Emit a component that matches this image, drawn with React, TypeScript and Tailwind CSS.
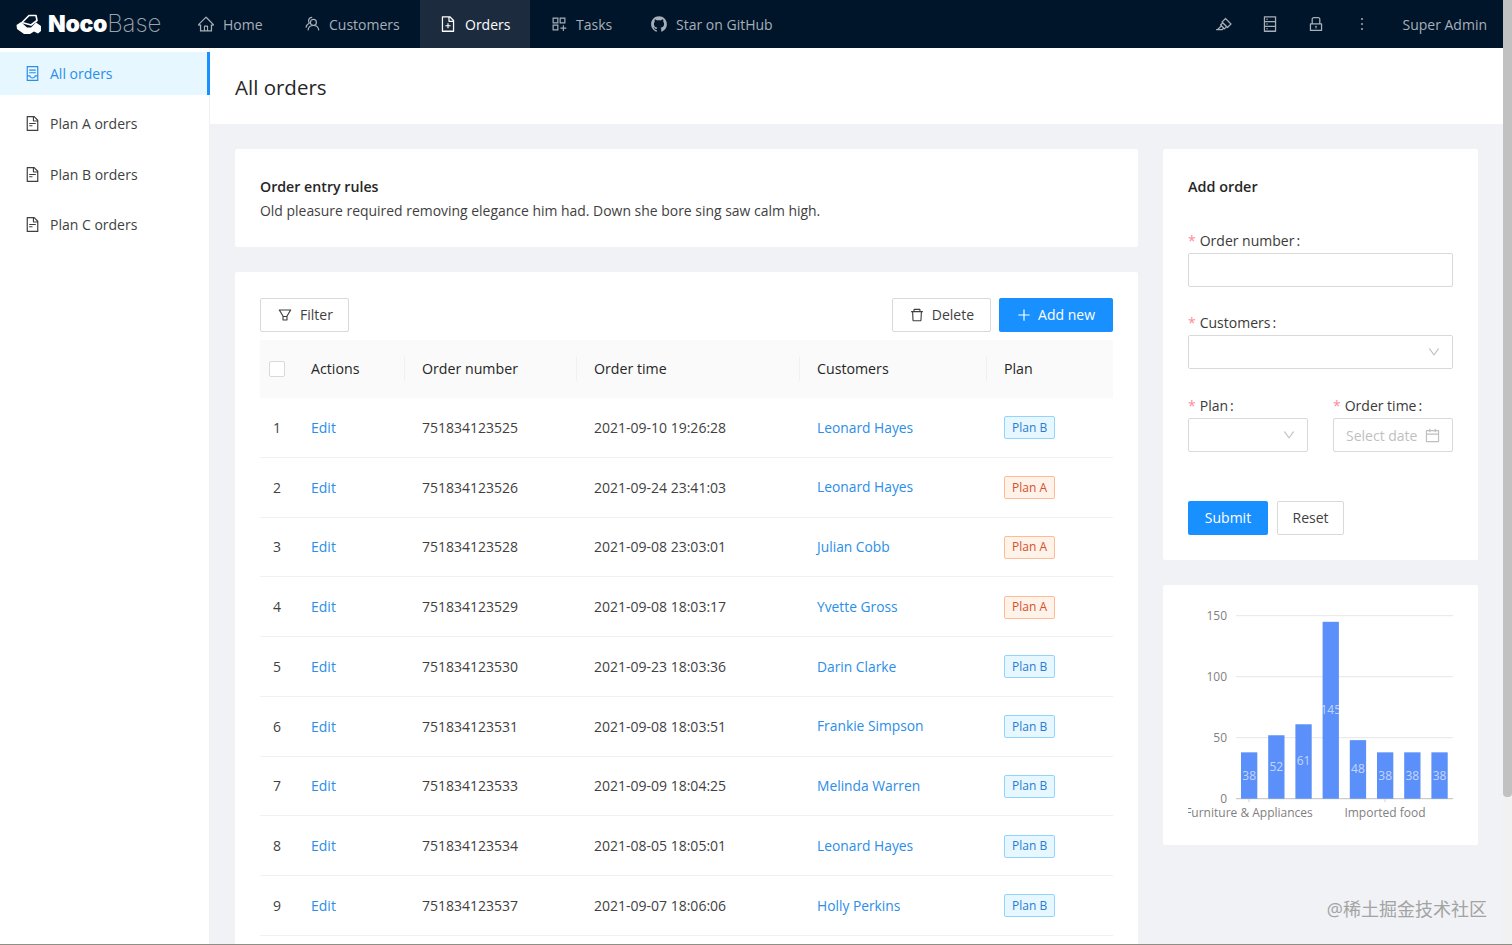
import React from 'react';
import {
  AiOutlineHome,
  AiOutlineFileAdd,
  AiOutlineAppstoreAdd,
  AiFillGithub,
  AiOutlineHighlight,
  AiOutlineDatabase,
  AiOutlineLock,
  AiOutlineMore,
  AiOutlineContainer,
  AiOutlineFileText,
  AiOutlineFilter,
  AiOutlineDelete,
  AiOutlinePlus,
  AiOutlineDown,
  AiOutlineCalendar,
} from 'react-icons/ai';

const orders = [
  { no: '751834123525', time: '2021-09-10 19:26:28', customer: 'Leonard Hayes', plan: 'B' },
  { no: '751834123526', time: '2021-09-24 23:41:03', customer: 'Leonard Hayes', plan: 'A' },
  { no: '751834123528', time: '2021-09-08 23:03:01', customer: 'Julian Cobb', plan: 'A' },
  { no: '751834123529', time: '2021-09-08 18:03:17', customer: 'Yvette Gross', plan: 'A' },
  { no: '751834123530', time: '2021-09-23 18:03:36', customer: 'Darin Clarke', plan: 'B' },
  { no: '751834123531', time: '2021-09-08 18:03:51', customer: 'Frankie Simpson', plan: 'B' },
  { no: '751834123533', time: '2021-09-09 18:04:25', customer: 'Melinda Warren', plan: 'B' },
  { no: '751834123534', time: '2021-08-05 18:05:01', customer: 'Leonard Hayes', plan: 'B' },
  { no: '751834123537', time: '2021-09-07 18:06:06', customer: 'Holly Perkins', plan: 'B' },
];

const bars = [38, 52, 61, 145, 48, 38, 38, 38];

const TeamIcon = () => (
  <svg width="18" height="18" viewBox="0 0 18 18" fill="none" stroke="currentColor" strokeWidth="1.2">
    <circle cx="10.4" cy="7.4" r="3" />
    <path d="M5 15.400c.3-2.900 2.500-4.900 5.400-4.900s5.100 2 5.400 4.900" />
    <path d="M9.200 2.300A3.400 3.400 0 0 0 5.600 5.700c0 .9.300 1.700.8 2.300-1.800.9-3.100 2.600-3.400 4.700" />
  </svg>
);

const NavItem: React.FC<{ icon: React.ReactNode; label: string; active?: boolean; className: string }> = ({
  icon,
  label,
  active,
  className,
}) => (
  <div
    className={`flex h-full items-center gap-[8px] ${className} ${active ? 'bg-[#1c2b3d] text-white' : 'text-[#a7afb9]'}`}
  >
    <span className="text-[18px]">{icon}</span>
    <span>{label}</span>
  </div>
);

const SideItem: React.FC<{ label: string; active?: boolean }> = ({ label, active }) => (
  <div
    className={`flex h-[43px] items-center gap-[9px] pl-[24px] ${
      active ? '-mr-px border-r-[3px] border-[#1890ff] bg-[#e6f7ff] text-[#2b8ee8]' : 'text-[#3f3f3f]'
    }`}
  >
    <span className="text-[17px]">{active ? <AiOutlineContainer /> : <AiOutlineFileText />}</span>
    <span>{label}</span>
  </div>
);

const Label: React.FC<{ text: string }> = ({ text }) => (
  <div className="mb-[2px] flex h-[22px] items-center text-[#3a3a3a]">
    <span className="mr-[4px] text-[#ff8a9a]">*</span>
    {text}
    <span className="ml-[2px]">:</span>
  </div>
);

const fieldClass = 'flex h-[34px] items-center rounded-[2px] border border-[#d9d9d9] bg-white';

const PlanTag: React.FC<{ plan: string }> = ({ plan }) => (
  <span
    className={`mt-[1px] inline-flex h-[23px] items-center rounded-[2px] border px-[7px] text-[12px] ${
      plan === 'A'
        ? 'border-[#ffbb96] bg-[#fff2e8] text-[#d4502d]'
        : 'border-[#91d5ff] bg-[#e6f7ff] text-[#2b7ccf]'
    }`}
  >
    Plan {plan}
  </span>
);

const Chart = () => (
  <svg width="315" height="260" viewBox="1163 585 315 260" className="block">
    {[150, 100, 50].map((v, i) => (
      <line key={v} x1="1236" x2="1453" y1={615.7 + i * 61} y2={615.7 + i * 61} stroke="#e6e6e6" strokeWidth="1" />
    ))}
    <line x1="1236" x2="1453" y1="798.7" y2="798.7" stroke="#bfbfbf" strokeWidth="1" />
    {[150, 100, 50, 0].map((v, i) => (
      <text key={v} x="1227" y={620 + i * 61} textAnchor="end" fontSize="12" fill="#7f7f7f">
        {v}
      </text>
    ))}
    {bars.map((v, i) => {
      const x = 1241 + i * 27.2;
      const h = v * 1.22;
      return (
        <g key={i}>
          <rect x={x} y={798.7 - h} width="16.3" height={h} fill="#5b8ff9" />
          <text
            x={x + 8.15}
            y={798.7 - h / 2 + 4}
            textAnchor="middle"
            fontSize="12"
            fill="#ffffff"
            fillOpacity="0.65"
          >
            {v}
          </text>
        </g>
      );
    })}
    <line x1="1249" x2="1249" y1="799" y2="802" stroke="#d0d0d0" />
    <line x1="1385" x2="1385" y1="799" y2="802" stroke="#d0d0d0" />
    <svg x="1188" y="800" width="130" height="24" viewBox="1188 800 130 24">
      <text x="1249" y="817" textAnchor="middle" fontSize="12" fill="#7f7f7f">
        Furniture &amp; Appliances
      </text>
    </svg>
    <text x="1385" y="817" textAnchor="middle" fontSize="12" fill="#7f7f7f">
      Imported food
    </text>
  </svg>
);

export default function App() {
  return (
    <div className="flex h-[945px] w-full overflow-hidden border-b border-[#8f8f85] bg-[#f0f2f5] font-['Open_Sans','Noto_Sans_CJK_SC',sans-serif] text-[14px] text-[#3f3f3f]">
      <div className="flex min-w-0 flex-1 flex-col">
        <header className="flex h-[48px] shrink-0 items-center bg-[#001529]">
          <div className="flex w-[175px] items-center pl-[16px]">
            <svg width="26" height="22" viewBox="0 0 26 22" className="shrink-0">
              <path d="M6 9.500 L13 2.500 L20 2.500 L21 7.500 L15 12 Z" fill="none" stroke="#fff" strokeWidth="1.600" strokeLinejoin="round" />
              <path d="M0.500 12 L5 9 L11 14.500 L15 14.500 L20 9.500 L25 13 L25 18 L22 20.500 L18 18.500 L14 21 L8 21 L1 16 Z" fill="#fff" />
            </svg>
            <span className="ml-[6px] font-['Inter'] text-[23px] font-black leading-none tracking-[-0.3px] text-white">Noco</span>
            <span className="font-['Inter'] text-[24px] font-extralight leading-none text-[#9aa3ad]">Base</span>
          </div>
          <NavItem className="w-[107px] pl-[22px]" icon={<AiOutlineHome />} label="Home" />
          <NavItem className="w-[138px] pl-[21px]" icon={<TeamIcon />} label="Customers" />
          <NavItem className="w-[110px] pl-[19px]" icon={<AiOutlineFileAdd />} label="Orders" active />
          <NavItem className="w-[100px] pl-[20px]" icon={<AiOutlineAppstoreAdd className="-scale-x-100" />} label="Tasks" />
          <NavItem className="w-[170px] pl-[20px]" icon={<AiFillGithub />} label="Star on GitHub" />
          <div className="ml-auto flex items-center pr-[16px] text-[#a7afb9]">
            <span className="flex w-[47px] justify-center text-[18px]"><AiOutlineHighlight /></span>
            <span className="flex w-[46px] justify-center text-[18px]"><AiOutlineDatabase /></span>
            <span className="flex w-[46px] justify-center text-[18px]"><AiOutlineLock /></span>
            <span className="flex w-[46px] justify-center text-[18px]"><AiOutlineMore /></span>
            <span className="ml-[17px]">Super Admin</span>
          </div>
        </header>

        <div className="flex min-h-0 flex-1">
          <aside className="w-[210px] shrink-0 border-r border-[#f0f0f0] bg-white pt-[4px]">
            <div className="flex flex-col gap-[7.33px]">
              <SideItem label="All orders" active />
              <SideItem label="Plan A orders" />
              <SideItem label="Plan B orders" />
              <SideItem label="Plan C orders" />
            </div>
          </aside>

          <main className="min-w-0 flex-1">
            <div className="flex h-[76px] items-center bg-white pl-[25px] pt-[2px] text-[20.5px] font-medium text-[#262626]">
              All orders
            </div>
            <div className="flex gap-[25px] pl-[25px] pt-[25px]">
              <div className="flex w-[903px] shrink-0 flex-col gap-[25px]">
                <section className="h-[98px] rounded-[2px] bg-white px-[25px] pt-[26px] leading-[24px]">
                  <div className="text-[14.2px] font-semibold text-[#262626]">Order entry rules</div>
                  <div className="text-[13.95px]">Old pleasure required removing elegance him had. Down she bore sing saw calm high.</div>
                </section>

                <section className="rounded-[2px] bg-white px-[25px] pb-[40px] pt-[26px]">
                  <div className="mb-[8px] flex h-[34px] items-center">
                    <button className="flex h-[34px] items-center gap-[7px] rounded-[2px] border border-[#d9d9d9] pb-[1px] pl-[16px] pr-[15px]">
                      <AiOutlineFilter className="text-[16px]" />
                      Filter
                    </button>
                    <button className="ml-auto flex h-[34px] items-center gap-[7px] rounded-[2px] border border-[#d9d9d9] pb-[1px] pl-[16px] pr-[16px]">
                      <AiOutlineDelete className="text-[16px]" />
                      Delete
                    </button>
                    <button className="ml-[8px] flex h-[34px] items-center gap-[6px] rounded-[2px] bg-[#1890ff] pb-[1px] pl-[17px] pr-[18px] text-white">
                      <AiOutlinePlus className="text-[16px]" />
                      Add new
                    </button>
                  </div>

                  <div className="grid h-[58px] grid-cols-[34px_111px_172px_223px_187px_126px] items-center bg-[#fafafa] pb-[1px] text-[14.2px] font-medium text-[#262626]">
                    <div className="flex justify-center">
                      <span className="h-[16px] w-[16px] rounded-[2px] border border-[#d9d9d9] bg-white" />
                    </div>
                    <div className="flex h-[24px] items-center border-r border-[#f0f0f0] pl-[17px]">Actions</div>
                    <div className="flex h-[24px] items-center border-r border-[#f0f0f0] pl-[17px]">Order number</div>
                    <div className="flex h-[24px] items-center border-r border-[#f0f0f0] pl-[17px]">Order time</div>
                    <div className="flex h-[24px] items-center border-r border-[#f0f0f0] pl-[17px]">Customers</div>
                    <div className="pl-[17px]">Plan</div>
                  </div>

                  {orders.map((o, i) => (
                    <div
                      key={o.no}
                      className="grid h-[59.75px] grid-cols-[34px_111px_172px_223px_187px_126px] items-center border-b border-[#f0f0f0]"
                    >
                      <div className="text-center">{i + 1}</div>
                      <div className="pl-[17px] text-[#2b8ee8]">Edit</div>
                      <div className="pl-[17px]">{o.no}</div>
                      <div className="pl-[17px]">{o.time}</div>
                      <div className="pl-[17px] pt-[1px] text-[13.8px] text-[#2b8ee8]">{o.customer}</div>
                      <div className="pl-[17px]">
                        <PlanTag plan={o.plan} />
                      </div>
                    </div>
                  ))}
                </section>
              </div>

              <div className="flex w-[315px] shrink-0 flex-col gap-[25px]">
                <section className="h-[411px] rounded-[2px] bg-white px-[25px] pt-[26px]">
                  <div className="mb-[30px] text-[14.4px] font-semibold leading-[24px] text-[#262626]">Add order</div>
                  <div className="mb-[24px]">
                    <Label text="Order number" />
                    <div className={fieldClass} />
                  </div>
                  <div className="mb-[25px]">
                    <Label text="Customers" />
                    <div className={`${fieldClass} justify-end pr-[11px] text-[#bfbfbf]`}>
                      <AiOutlineDown className="text-[14px]" />
                    </div>
                  </div>
                  <div className="mb-[49px] flex gap-[25px]">
                    <div className="w-[120px]">
                      <Label text="Plan" />
                      <div className={`${fieldClass} justify-end pr-[11px] text-[#bfbfbf]`}>
                        <AiOutlineDown className="text-[14px]" />
                      </div>
                    </div>
                    <div className="w-[120px]">
                      <Label text="Order time" />
                      <div className={`${fieldClass} justify-between pl-[12px] pr-[11px] text-[#bfbfbf]`}>
                        <span>Select date</span>
                        <AiOutlineCalendar className="text-[17px]" />
                      </div>
                    </div>
                  </div>
                  <div className="flex gap-[9px]">
                    <button className="h-[34px] w-[80px] rounded-[2px] bg-[#1890ff] pb-[1px] text-white">Submit</button>
                    <button className="h-[34px] w-[67px] rounded-[2px] border border-[#d9d9d9] pb-[1px]">Reset</button>
                  </div>
                </section>

                <section className="h-[260px] rounded-[2px] bg-white">
                  <Chart />
                </section>

                <div className="-mr-[9px] mt-[27px] text-right text-[18px] leading-[24px] text-[#a3a3a3]">
                  @稀土掘金技术社区
                </div>
              </div>
            </div>
          </main>
        </div>
      </div>
      <div className="w-[9px] shrink-0 bg-[#f1f1f1]">
        <div className="h-[797px] rounded-b-[4px] bg-[#c1c1c1]" />
      </div>
    </div>
  );
}
